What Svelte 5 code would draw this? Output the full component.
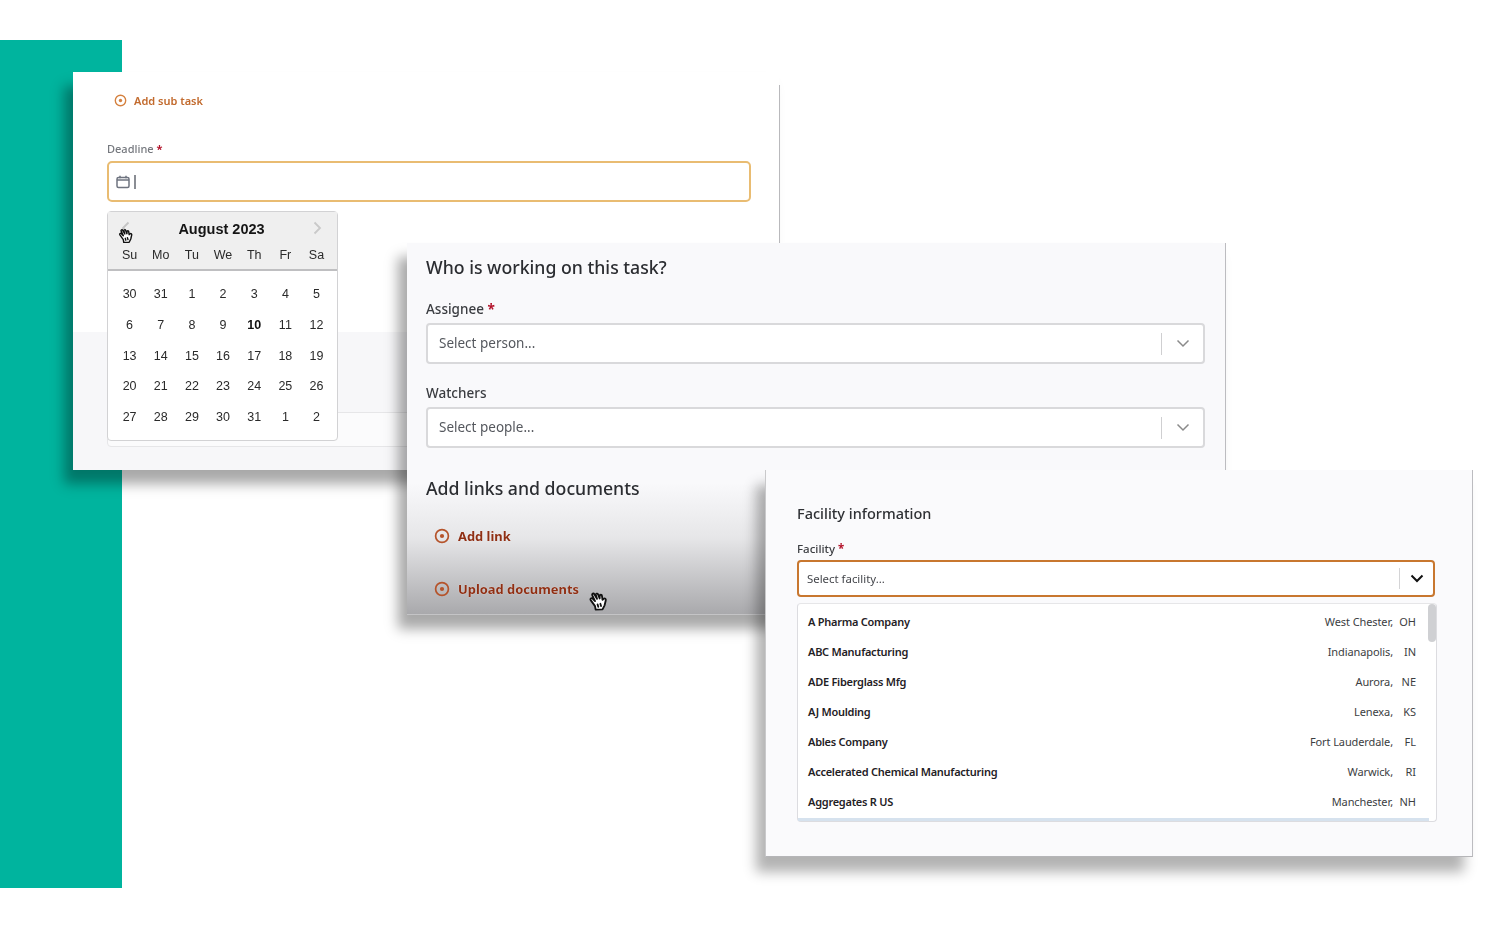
<script>
  const weeks = [
    [30,31,1,2,3,4,5],[6,7,8,9,10,11,12],[13,14,15,16,17,18,19],[20,21,22,23,24,25,26],[27,28,29,30,31,1,2]
  ];
  const days = ['Su','Mo','Tu','We','Th','Fr','Sa'];
  const facilities = [
    ['A Pharma Company','West Chester,','OH'],
    ['ABC Manufacturing','Indianapolis,','IN'],
    ['ADE Fiberglass Mfg','Aurora,','NE'],
    ['AJ Moulding','Lenexa,','KS'],
    ['Ables Company','Fort Lauderdale,','FL'],
    ['Accelerated Chemical Manufacturing','Warwick,','RI'],
    ['Aggregates R US','Manchester,','NH']
  ];
</script>

{#snippet plus(size, color)}
  <svg class="plus" width={size} height={size} viewBox="0 0 16 16" fill="none">
    <circle cx="8" cy="8" r="6.4" stroke={color} stroke-width="1.7"/>
    <circle cx="8" cy="8" r="2.1" fill={color}/>
  </svg>
{/snippet}

{#snippet hand(size)}
  <svg class="hand" width={size} height={size} viewBox="0 0 20 20" fill="#fff" stroke="#111" stroke-width="1.6" stroke-linejoin="round" stroke-linecap="round">
    <path d="M7 14 3.2 8.800c-.8-1.200.7-2.300 1.700-1.300L7 9.600 4.600 4.600c-.6-1.300 1.100-2.100 1.800-.9l2.300 4-1-3.300c-.3-1.300 1.400-1.800 1.900-.6l1.400 3.600.1-2.300c.1-1.300 1.800-1.200 1.900 0l.5 3.400 1-.9c1-.8 2.200.2 1.800 1.500l-1 4.200-1.800 3.600-6 .2L7 14Z"/>
    <path d="M9.200 12.600l.6 2M11.600 12l.6 2"/>
  </svg>
{/snippet}

{#snippet chevron(color, w)}
  <svg width="14" height="9" viewBox="0 0 14 9" fill="none"><path d="M1.500 1.500 7 7l5.500-5.500" stroke={color} stroke-width={w}/></svg>
{/snippet}

<div class="stage">
  <div class="teal"></div>

  <section class="win one">
    <div class="rightline"></div>
    <div class="low"><div class="lowbox"></div></div>
    <div class="content-one">
      <div class="sub">{@render plus(13, '#d5813f')}<span>Add sub task</span></div>
      <div class="deadline">Deadline <i>*</i></div>
      <div class="dateinput">
        <svg width="14" height="14" viewBox="0 0 14 14" fill="none" stroke="#6f7480" stroke-width="1.5"><rect x="1" y="2.500" width="12" height="10" rx="1.500"/><path d="M1 5h12M4 .8v2.400M10 .8v2.400"/></svg>
        <span class="caret"></span>
      </div>
      <div class="cal">
        <div class="calhead">
          <div class="month">
            <svg width="9" height="14" viewBox="0 0 9 14" fill="none"><path d="M7.500 1.500 2 7l5.500 5.500" stroke="#c4c4c4" stroke-width="1.800"/></svg>
            <b>August 2023</b>
            <svg width="9" height="14" viewBox="0 0 9 14" fill="none"><path d="M1.500 1.500 7 7l-5.500 5.500" stroke="#c9c9c9" stroke-width="1.800"/></svg>
          </div>
          <div class="row dow">{#each days as d}<span>{d}</span>{/each}</div>
        </div>
        <div class="weeks">
          {#each weeks as w}
            <div class="row">{#each w as d}<span class:strong={d === 10}>{d}</span>{/each}</div>
          {/each}
        </div>
        <div class="c1">{@render hand(18)}</div>
      </div>
    </div>
  </section>

  <section class="win two">
    <h2>Who is working on this task?</h2>
    <div class="lab assignee">Assignee <i>*</i></div>
    <div class="sel"><span>Select person...</span><em></em>{@render chevron('#8a8a8a', 1.5)}</div>
    <div class="lab watchers">Watchers</div>
    <div class="sel"><span>Select people...</span><em></em>{@render chevron('#8a8a8a', 1.5)}</div>
    <h2 class="links">Add links and documents</h2>
    <div class="act first">{@render plus(16, '#b5532a')}<span>Add link</span></div>
    <div class="act">{@render plus(16, '#b5532a')}<span>Upload documents</span>{@render hand(23)}</div>
  </section>

  <section class="win three">
    <h3>Facility information</h3>
    <div class="flab">Facility <i>*</i></div>
    <div class="fsel"><span>Select facility...</span><em></em>{@render chevron('#111', 2)}</div>
    <div class="list">
      <div class="thumb"></div>
      {#each facilities as f}
        <div class="item"><b>{f[0]}</b><span class="city">{f[1]}</span><span class="st">{f[2]}</span></div>
      {/each}
      <div class="hi"></div>
    </div>
  </section>
</div>

<style>
  :global(body) { margin: 0; background: #fff; }
  .stage { position: relative; width: 1500px; height: 929px; overflow: hidden; font-family: "Noto Sans", "Open Sans", sans-serif; color: #26282c; filter: blur(.35px); }
  .teal { position: absolute; left: 0; top: 40px; width: 122px; height: 848px; background: #00b49e; }
  .win { position: absolute; box-sizing: border-box; }
  i { color: #b3122a; font-style: normal; font-weight: 700; }

  .one { left: 73px; top: 72px; width: 706px; height: 398px; background: #fff; box-shadow: -9px 14px 12px rgba(0,0,0,.34); }
  .rightline { position: absolute; right: -1px; top: 13px; bottom: 0; width: 1px; background: #b9b9bc; }
  .low { position: absolute; left: 0; right: 0; top: 260px; bottom: 0; background: #f7f7f9; }
  .lowbox { position: absolute; left: 34px; right: 0; top: 80px; height: 33px; border: 1px solid #e6e6e8; border-radius: 4px; background: #fbfbfc; }
  .content-one { position: relative; padding: 20px 28px 0 34px; }
  .sub { display: flex; align-items: center; gap: 7px; padding-left: 7px; height: 16px; font-size: 11px; font-weight: 600; color: #c26a2d; }
  .deadline { margin-top: 33px; font-size: 11px; line-height: 16px; color: #75787e; font-weight: 500; }
  .dateinput { display: flex; align-items: center; gap: 4px; margin-top: 4px; height: 41px; box-sizing: border-box; border: 2px solid #e9bc72; border-radius: 5px; padding: 0 7px; background: #fff; }
  .caret { width: 2px; height: 14px; background: #8a8d94; }
  .cal { position: relative; box-sizing: border-box; margin-top: 9px; width: 231px; height: 230px; border: 1px solid #d2d2d4; border-radius: 4px; background: #fff; }
  .calhead { background: #efefef; height: 57px; border-bottom: 2px solid #bfbfc1; }
  .month { display: flex; align-items: flex-start; justify-content: space-between; padding: 9px 15px 0 13px; height: 23px; }
  .month b { font-family: "Liberation Sans", sans-serif; font-size: 14.5px; color: #151515; font-weight: 700; }
  .row { display: grid; grid-template-columns: repeat(7, 31.17px); padding-left: 6px; font-family: "Liberation Sans", sans-serif; font-size: 12.5px; text-align: center; color: #2a2a2a; }
  .dow { margin-top: 3px; line-height: 16px; }
  .weeks { display: grid; padding-top: 15px; grid-auto-rows: 30.8px; line-height: 17px; }
  .strong { font-weight: 700; color: #111; }
  .c1 { position: absolute; left: 9px; top: 15px; }

  .two { left: 407px; top: 243px; width: 819px; height: 372px; padding: 12px 20px 0 19px; border-right: 1px solid #bcbcc0; border-bottom: 1px solid #c4c4c6;
    background: linear-gradient(180deg, #f9f9fb 0, #f9f9fb 240px, #e6e6e8 295px, #a9a9ac 371px);
    box-shadow: -9px 14px 12px rgba(0,0,0,.34); }
  h2 { margin: 0; font-size: 17.700px; line-height: 24px; font-weight: 500; color: #2b2d31; }
  .lab { font-size: 13.500px; line-height: 18px; color: #3a3c40; font-weight: 500; }
  .assignee { margin-top: 21px; }
  .watchers { margin-top: 20px; }
  .sel { display: flex; align-items: center; box-sizing: border-box; margin-top: 5px; height: 41px; border: 2px solid #d9d9db; border-radius: 4px; background: #fff; padding: 0 13px 0 11px; font-size: 13.500px; color: #55585e; }
  .sel span, .fsel span { flex: 1; }
  .sel span { margin-top: -2px; }
  .sel em { width: 1.500px; height: 22px; background: #cfcfd1; margin-right: 14px; }
  .links { margin-top: 28px; }
  .act { display: flex; align-items: center; gap: 8px; padding-left: 8px; margin-top: 35px; height: 18px; font-size: 12.900px; font-weight: 700; color: #8f2f14; text-shadow: 0 0 1px #fff; }
  .act.first { margin-top: 27px; }
  .hand { flex: none; }
  .act .hand { margin: 24px 0 0 0; }

  .three { left: 765px; top: 470px; width: 708px; height: 387px; padding: 32px 37px 0 31px; background: #fafafc; border-right: 1px solid #bcbcc0; border-left: 1px solid #c9c9cb; border-bottom: 1px solid #b5b5b8;
    box-shadow: -9px 15px 12px rgba(0,0,0,.3); }
  h3 { margin: 0; font-size: 14.500px; line-height: 22px; font-weight: 500; color: #2e3034; }
  .flab { margin-top: 17px; font-size: 11.500px; line-height: 16px; font-weight: 500; color: #3a3c40; }
  .fsel { display: flex; align-items: center; box-sizing: border-box; margin-top: 3px; height: 37px; width: 638px; border: 2px solid #c8772f; border-radius: 4px; background: #fff; padding: 0 9px 0 8px; font-size: 11.400px; color: #44464b; }
  .fsel em { width: 1.500px; height: 21px; background: #d4d4d6; margin-right: 10px; }
  .list { position: relative; box-sizing: border-box; margin-top: 6px; height: 219px; width: 640px; padding: 2px 20px 0 10px; border: 1px solid #dcdce0; border-top-color: #e6e6e8; border-radius: 4px; background: #fff; }
  .item { display: flex; align-items: center; height: 30px; font-size: 11px; color: #1f2125; }
  .item b { flex: 1; font-weight: 600; letter-spacing: -.26px; }
  .city { color: #3c3e42; letter-spacing: -.1px; }
  .st { width: 23px; text-align: right; color: #3c3e42; }
  .thumb { position: absolute; right: 0; top: 0; width: 8px; height: 38px; border-radius: 4px; background: #cfd0d3; }
  .hi { position: absolute; left: 0; right: 7px; bottom: 0; height: 3px; background: #d6e2ee; }
</style>
